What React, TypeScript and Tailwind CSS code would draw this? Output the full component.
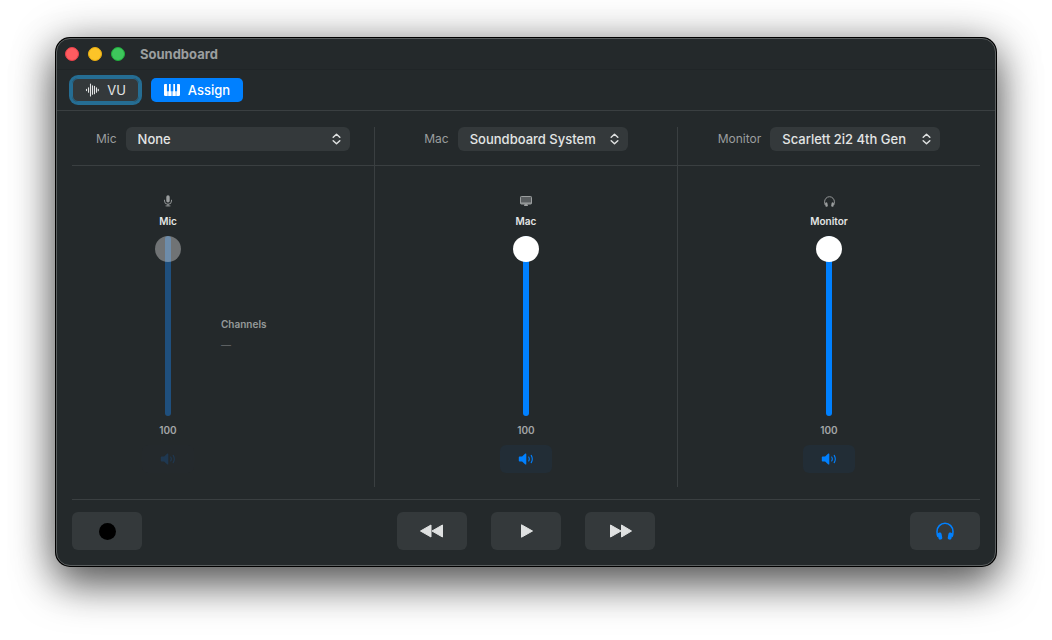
import { useState } from "react";
import type { CSSProperties, ReactNode } from "react";

function WaveformIcon() {
  return (
    <svg width="14" height="14" viewBox="0 0 14 14" fill="none" stroke="currentColor" strokeWidth="1.100" strokeLinecap="round" aria-hidden="true">
      <path d="M1.500 6.400v1.200M3.500 4.700v4.600M5.500 1v12M7.500 2.700v8.600M9.500 3.200v7.600M11.500 4.700v4.600M13.300 6.200v1.600" />
    </svg>
  );
}

function PianoIcon() {
  return (
    <svg width="16" height="12" viewBox="0 0 16 12" fill="currentColor" aria-hidden="true">
      <path d="M1 0h1.900v7.200h.8V12H1.200A1.200 1.200 0 0 1 0 10.800V1A1 1 0 0 1 1 0zM5 0h1.700v7.200h.9V12H4.200V7.200H5zM9.300 0H11v7.200h.8V12H8.400V7.200h.9zM13.100 0H15a1 1 0 0 1 1 1v9.800a1.200 1.200 0 0 1-1.200 1.200h-2.500V7.200h.8z" />
    </svg>
  );
}

function MicIcon() {
  return (
    <svg width="12" height="12" viewBox="0 0 12 12" fill="none" stroke="currentColor" strokeWidth="0.9" strokeLinecap="round" aria-hidden="true">
      <rect x="4.300" y="0.200" width="3.400" height="7.200" rx="1.700" fill="currentColor" stroke="none" />
      <path d="M2.500 5.200v.8a3.500 3.300 0 0 0 7 0v-.8M6 9.300v1.500M4 10.900h4" />
    </svg>
  );
}

function DisplayIcon() {
  return (
    <svg width="12" height="12" viewBox="0 0 12 12" aria-hidden="true">
      <rect x="0.500" y="1.500" width="11" height="7.500" rx="0.800" fill="currentColor" fillOpacity="0.450" stroke="currentColor" />
      <path d="M.5 7.500h11v1.200H.5zM4.500 9h3v1.300h.5v.7H4v-.7h.5z" fill="currentColor" />
    </svg>
  );
}

function HeadphonesIcon({ large = false }: { large?: boolean }) {
  const size = large ? 18 : 11;
  return (
    <svg width={size} height={size} viewBox="0 0 20 20" aria-hidden="true">
      <path d="M2.300 16.500C1.400 14.800 1.100 13 1.100 10.600a8.900 9.300 0 0 1 17.800 0c0 2.400-.3 4.200-1.200 5.900" fill="none" stroke="currentColor" strokeWidth="1.700" />
      <rect x="2.300" y="11.600" width="4.300" height="8" rx="2" transform="rotate(-11 4.400 15.600)" fill="currentColor" />
      <rect x="13.400" y="11.600" width="4.300" height="8" rx="2" transform="rotate(11 15.600 15.600)" fill="currentColor" />
    </svg>
  );
}

function SpeakerIcon() {
  return (
    <svg width="16" height="12" viewBox="0 0 16 12" aria-hidden="true">
      <path d="M1.600 3.500h2.500L7.300.6c.5-.4 1-.1 1 .4v10c0 .5-.5.8-1 .4L4.100 8.500H1.600C1.100 8.500.8 8.200.8 7.700V4.300c0-.5.3-.8.8-.8z" fill="currentColor" />
      <path d="M10.700 4q1.200 2 0 4M13.200 2.400q2.200 3.600 0 7.200" fill="none" stroke="currentColor" strokeWidth="1.100" strokeLinecap="round" />
    </svg>
  );
}

function ChevronsIcon() {
  return (
    <svg width="9" height="12" viewBox="0 0 9 12" fill="none" stroke="currentColor" strokeWidth="1.500" strokeLinecap="round" strokeLinejoin="round" aria-hidden="true">
      <path d="M1.200 4.200 4.500 1.200l3.300 3M1.200 7.800l3.300 3 3.300-3" />
    </svg>
  );
}

function RewindIcon() {
  return (
    <svg width="24" height="14" viewBox="0 0 24 14" fill="currentColor" stroke="currentColor" strokeWidth="1" strokeLinejoin="round" aria-hidden="true">
      <path d="M11 1v12L.5 7zM22.500 1v12L12 7z" />
    </svg>
  );
}

function ForwardIcon() {
  return (
    <svg width="24" height="14" viewBox="0 0 24 14" fill="currentColor" stroke="currentColor" strokeWidth="1" strokeLinejoin="round" aria-hidden="true">
      <path d="M2.500 1v12L13 7zM13.500 1v12L23.500 7z" />
    </svg>
  );
}

function PlayIcon() {
  return (
    <svg width="14" height="14" viewBox="0 0 14 14" fill="currentColor" stroke="currentColor" strokeWidth="1" strokeLinejoin="round" aria-hidden="true">
      <path d="M2.500 .8v12.400L13.500 7z" />
    </svg>
  );
}

type DeviceSelectProps = { id: string; label: string; options: string[]; wide?: boolean };

function DeviceSelect({ id, label, options, wide = false }: DeviceSelectProps) {
  return (
    <div className="flex items-center justify-center gap-[9px] border-b border-[#3a3f41] px-6 pb-3.5">
      <label htmlFor={id} className="text-xs text-[#9b9e9f]">{label}</label>
      <div className={wide ? "grid flex-1 items-center" : "grid w-[170px] items-center"}>
        <select
          id={id}
          className="col-start-1 row-start-1 h-6 w-full appearance-none rounded-md bg-[#34393b] pr-7 pl-3 font-medium text-[#e3e5e5] outline-none focus-visible:ring-2 focus-visible:ring-[#256d93]"
        >
          {options.map((option) => (
            <option key={option}>{option}</option>
          ))}
        </select>
        <span className="pointer-events-none col-start-1 row-start-1 mr-[9px] justify-self-end text-[#dfe1e1]">
          <ChevronsIcon />
        </span>
      </div>
    </div>
  );
}

type FaderProps = { id: string; label: string; icon: ReactNode; disabled?: boolean };

function Fader({ id, label, icon, disabled = false }: FaderProps) {
  const [level, setLevel] = useState(100);
  const [audible, setAudible] = useState(true);
  const fill = { "--level": `${level}%` } as CSSProperties;

  return (
    <div className="flex w-[52px] flex-col items-center text-[10px] leading-[14px]">
      <span className="flex h-3 items-center text-[#9b9e9f]">{icon}</span>
      <label htmlFor={id} className="mt-[7px] font-semibold text-[#e3e5e5]">{label}</label>
      <input
        id={id}
        type="range"
        min={0}
        max={100}
        value={level}
        disabled={disabled}
        onChange={(event) => setLevel(Number(event.target.value))}
        style={fill}
        className="mt-2 h-[180px] w-[26px] appearance-none bg-transparent outline-none [--fill:#0080ff] [--thumb:#ffffff] [--track:#34393b] [direction:rtl] [writing-mode:vertical-lr] disabled:[--fill:#1f4f7d] disabled:[--thumb:#ffffff59] [&::-webkit-slider-runnable-track]:h-full [&::-webkit-slider-runnable-track]:w-[6px] [&::-webkit-slider-runnable-track]:rounded-full [&::-webkit-slider-runnable-track]:bg-[linear-gradient(to_top,var(--fill)_var(--level),var(--track)_var(--level))] [&::-webkit-slider-thumb]:-ml-[10px] [&::-webkit-slider-thumb]:size-[26px] [&::-webkit-slider-thumb]:appearance-none [&::-webkit-slider-thumb]:rounded-full [&::-webkit-slider-thumb]:bg-(--thumb)"
      />
      <output htmlFor={id} className="mt-[7px] font-semibold text-[#a3a6a7]">{level}</output>
      <button
        type="button"
        aria-label={`Toggle ${label} sound`}
        aria-pressed={audible}
        disabled={disabled}
        onClick={() => setAudible(!audible)}
        className="mt-2 flex h-7 w-[52px] items-center justify-center rounded-md bg-[#222d36] text-[#0080ff] disabled:bg-[#24292c] disabled:text-[#1f3851]"
      >
        <SpeakerIcon />
      </button>
    </div>
  );
}

function TransportButton({ label, children }: { label: string; children: ReactNode }) {
  return (
    <button
      type="button"
      aria-label={label}
      className="flex h-[38px] w-[70px] items-center justify-center rounded-md bg-[#34393b] text-[#dfe1e1]"
    >
      {children}
    </button>
  );
}

export default function App() {
  return (
    <div className="flex min-h-screen flex-col bg-white px-14 pt-[38px] pb-[74px] font-[Inter,'Liberation_Sans',sans-serif] text-[13px] leading-4">
      <div className="flex flex-1 flex-col rounded-[14px] border border-[#5a5e5f] bg-[#24292b] shadow-[0_0_0_1px_#000,0_20px_40px_rgba(0,0,0,0.5),0_4px_44px_rgba(0,0,0,0.4)]">
        <header className="flex h-[31px] items-center border-b border-[#202527] px-2">
          <div className="flex gap-[9px]">
            <button type="button" aria-label="Close" className="size-3.5 rounded-full border border-[#e9404a] bg-[#ff5c60]" />
            <button type="button" aria-label="Minimize" className="size-3.5 rounded-full border border-[#eaae10] bg-[#fcc428]" />
            <button type="button" aria-label="Zoom" className="size-3.5 rounded-full border border-[#1fae3c] bg-[#3ec65c]" />
          </div>
          <h1 className="ml-[15px] font-bold text-[#9b9e9f]">Soundboard</h1>
        </header>

        <nav className="flex gap-3 border-b border-[#3a3f41] px-[15px] py-2">
          <button type="button" className="flex h-6 w-[67px] items-center justify-center gap-2 rounded-md bg-[#34393b] text-[#e3e5e5] ring-3 ring-[#256d93] outline-1 -outline-offset-1 outline-[#256d93]">
            <WaveformIcon />
            VU
          </button>
          <button type="button" className="flex h-6 w-[92px] items-center justify-center gap-2 rounded-[5px] bg-[#0080ff] font-medium text-white">
            <PianoIcon />
            Assign
          </button>
        </nav>

        <main className="flex flex-1 flex-col px-[15px] pt-4 pb-[15px]">
          <div className="grid flex-1 grid-cols-[1fr_1px_1fr_1px_1fr]">
            <section>
              <DeviceSelect id="mic-device" label="Mic" options={["None"]} wide />
              <div className="flex items-center gap-[27px] pt-[29px] pb-3.5 pl-[70px]">
                <Fader id="mic-level" label="Mic" icon={<MicIcon />} disabled />
                <dl className="text-[10px] leading-[14px]">
                  <dt className="font-semibold text-[#95999a]">Channels</dt>
                  <dd className="mt-[7px] text-[#696d6f]">—</dd>
                </dl>
              </div>
            </section>
            <div className="bg-[#3a3f41]" />
            <section>
              <DeviceSelect id="mac-device" label="Mac" options={["Soundboard System"]} />
              <div className="flex justify-center pt-[29px] pb-3.5">
                <Fader id="mac-level" label="Mac" icon={<DisplayIcon />} />
              </div>
            </section>
            <div className="bg-[#3a3f41]" />
            <section>
              <DeviceSelect id="monitor-device" label="Monitor" options={["Scarlett 2i2 4th Gen"]} />
              <div className="flex justify-center pt-[29px] pb-3.5">
                <Fader id="monitor-level" label="Monitor" icon={<HeadphonesIcon />} />
              </div>
            </section>
          </div>

          <footer className="mt-3 flex items-center justify-between border-t border-[#3a3f41] pt-3">
            <TransportButton label="Record">
              <span className="size-[17px] rounded-full bg-black" />
            </TransportButton>
            <div className="flex gap-6">
              <TransportButton label="Rewind"><RewindIcon /></TransportButton>
              <TransportButton label="Play"><PlayIcon /></TransportButton>
              <TransportButton label="Fast forward"><ForwardIcon /></TransportButton>
            </div>
            <TransportButton label="Monitor with headphones">
              <span className="text-[#0080ff]"><HeadphonesIcon large /></span>
            </TransportButton>
          </footer>
        </main>
      </div>
    </div>
  );
}
